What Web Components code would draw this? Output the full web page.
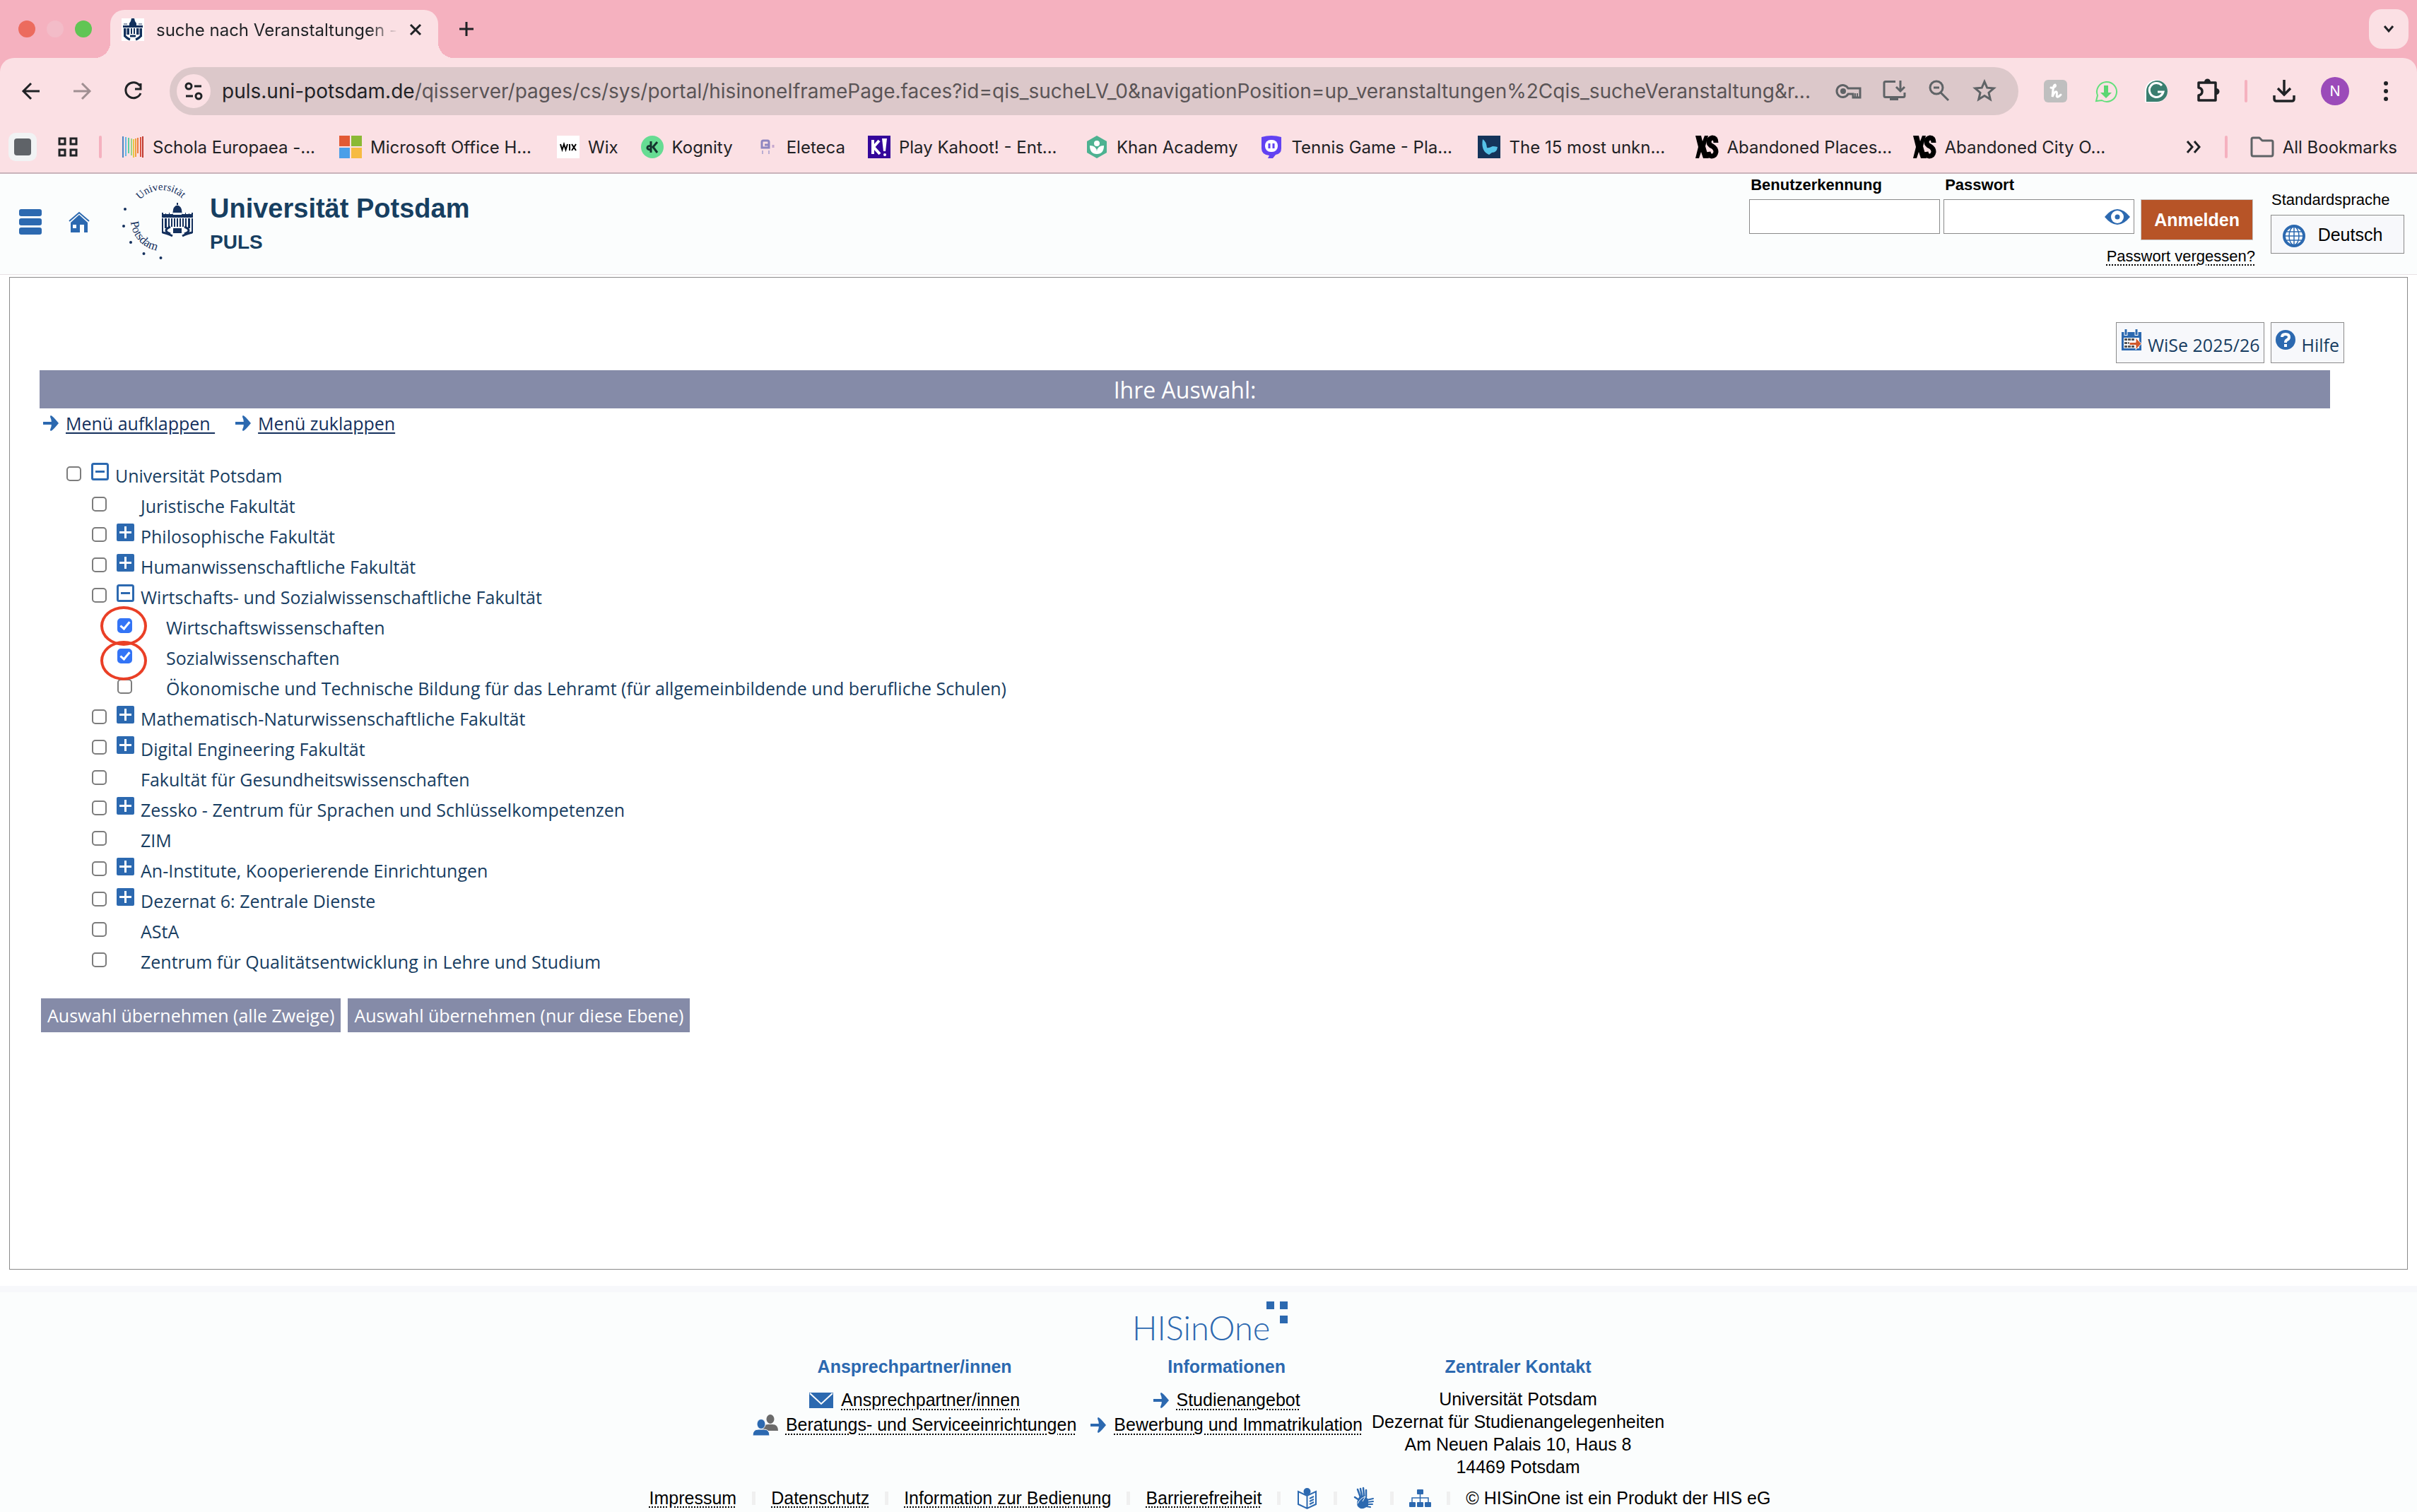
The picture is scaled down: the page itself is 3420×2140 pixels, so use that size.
<!DOCTYPE html>
<html lang="de">
<head>
<meta charset="utf-8">
<title>suche nach Veranstaltungen</title>
<style>
  html, body { margin: 0; }
  body { min-height: 100vh; display: flex; flex-direction: column; background: #fff;
    font-family: "Liberation Sans", Arial, sans-serif; font-size: 25px; color: #000;
    --blue: #2c69b0; --navy: #173d61; --tint: #fbfdfd; --box: #f7f8fb; --line: #8a8a8a; }
</style>
</head>
<body>
<browser-tabs></browser-tabs>
<browser-toolbar></browser-toolbar>
<browser-bookmarks></browser-bookmarks>
<site-header></site-header>
<course-panel></course-panel>
<site-footer></site-footer>

<script>
const ICONS = {
  favicon: [32, 32, '<path fill="#fff" d="M0 0h32v32H0z"/><path fill="#12305c" d="M14 0h4l1 4 2 3v3H11V7l2-3zM2 10h28v3H2zM3 14h3v12H3zM8 14h3v9H8zM13 14h2v8h-2zM17 14h2v8h-2zM21 14h3v9h-3zM26 14h3v12h-3z"/><path fill="none" stroke="#12305c" stroke-width="3" d="M4 24c3 4 5 5 8 6M28 24c-3 4-5 5-8 6M12 25h8"/><path fill="#8f9bb0" d="M6 14h2v9H6zM24 14h2v9h-2zM3 7h5v2H3zM24 7h5v2h-5z"/>'],
  close: [20, 20, '<path stroke="#1f2225" stroke-width="3" d="M3 3l14 14M17 3L3 17"/>'],
  plus: [24, 24, '<path stroke="#1f2225" stroke-width="3" d="M12 2v20M2 12h20"/>'],
  chevron: [16, 12, '<path fill="none" stroke="#1f2225" stroke-width="3" d="M2 2l6 7 6-7"/>'],
  back: [40, 40, '<path fill="none" stroke="#1f2225" stroke-width="3" d="M32 20H10M20 9L9 20l11 11"/>'],
  forward: [40, 40, '<path fill="none" stroke="#a08f92" stroke-width="3" d="M8 20h22M20 9l11 11-11 11"/>'],
  reload: [40, 40, '<path fill="none" stroke="#1f2225" stroke-width="3" d="M30 12.500A11 11 0 1 0 31 23M31 9v8h-8"/>'],
  tune: [48, 48, '<circle cx="24" cy="24" r="24" fill="#fbe0e4"/><g fill="none" stroke="#1f2225" stroke-width="3"><circle cx="17" cy="17" r="4"/><circle cx="31" cy="31" r="4"/><path d="M25 17h10M13 31h10"/></g>'],
  key: [40, 40, '<g fill="none" stroke="#5f6366" stroke-width="3"><path d="M19 16a8.500 8.500 0 1 0 0 8h7v5h10V16z"/></g><circle cx="12" cy="20" r="4" fill="#5f6366"/><path stroke="#5f6366" stroke-width="2" d="M29 23v5M32 23v5"/>'],
  install: [40, 40, '<path fill="none" stroke="#5f6366" stroke-width="3" d="M22 6.500H8q-2 0-2 2v18q0 2 2 2h25q2 0 2-2V22M29 5v15M23 14l6 6 6-6"/><path fill="#5f6366" d="M14 28h12v5H14z"/>'],
  zoomout: [40, 40, '<g fill="none" stroke="#5f6366" stroke-width="3"><circle cx="16" cy="15" r="9"/><path d="M22 22l11 11M12 15h8"/></g>'],
  star: [40, 40, '<path fill="none" stroke="#5f6366" stroke-width="3" d="M20 6.500l3.700 8.700 9.500.8-7.200 6.200 2.200 9.300-8.200-5-8.200 5 2.200-9.300-7.200-6.200 9.500-.8z"/>'],
  honey: [40, 40, '<rect x="4" y="4" width="33" height="32" rx="6" fill="#bfbfbf"/><path fill="none" stroke="#fff" stroke-width="3" stroke-linecap="round" d="M14 15c4 1 8-2 6-4-3 0-3 8-4 17 2-5 4-8 6-7 2 2-2 8 2 7 2-.500 3-2 4-3"/>'],
  whats: [40, 40, '<path fill="none" stroke="#63e07c" stroke-width="2" d="M6 34l2-8A14 14 0 1 1 14 33z"/><path fill="#5cd672" d="M17 12h6v10h5l-8 8-8-8h5z"/>'],
  grammar: [40, 40, '<path fill="#fff" d="M3 36V20A16 16 0 1 1 19 36z"/><path fill="#3a7e6f" d="M5 35V20A15 15 0 1 1 19 35z"/><path fill="none" stroke="#fff" stroke-width="3" d="M27 12a10 10 0 1 0 2 9H21"/>'],
  puzzle: [40, 40, '<path fill="none" stroke="#1f2225" stroke-width="3.500" stroke-linejoin="round" d="M7 8h24v25H7v-7q5-1 5-5.500T7 15z"/><path fill="#1f2225" d="M15 7a4.500 4.500 0 0 1 9 0zM32 16a4.500 4.500 0 0 1 0 9z"/>'],
  download: [40, 40, '<path fill="none" stroke="#1f2225" stroke-width="3.500" d="M20 4v21M11 16l9 9 9-9M6 26v5q0 3 3 3h22q3 0 3-3v-5"/>'],
  dots: [40, 40, '<g fill="#1f2225"><circle cx="20" cy="9" r="3"/><circle cx="20" cy="20" r="3"/><circle cx="20" cy="31" r="3"/></g>'],
  square: [40, 40, '<rect width="40" height="40" rx="10" fill="#f1f3f4"/><rect x="8" y="8" width="24" height="24" rx="4" fill="#5f6368"/>'],
  grid: [28, 28, '<g fill="none" stroke="#1f2225" stroke-width="3"><path d="M2 2h8v8H2zM18 2h8v8h-8zM2 18h8v8H2zM18 18h8v8h-8z"/></g>'],
  schola: [32, 32, '<g stroke-width="2"><path stroke="#4d86c4" d="M2 1v30"/><path stroke="#62b8e8" d="M6 2v27"/><path stroke="#5ccfa0" d="M10 3v22"/><path stroke="#9dd58a" d="M14 4v24"/><path stroke="#e9c746" d="M17 5v26"/><path stroke="#f0a040" d="M20 4v26"/><path stroke="#ee7d3c" d="M23 3v22"/><path stroke="#d9503f" d="M27 2v28"/><path stroke="#c0392f" d="M30 1v30"/></g>'],
  microsoft: [32, 32, '<path fill="#e25a34" d="M0 0h15v15H0z"/><path fill="#8bb935" d="M17 0h15v15H17z"/><path fill="#4a9fe8" d="M0 17h15v15H0z"/><path fill="#f6bb42" d="M17 17h15v15H17z"/>'],
  wix: [32, 32, '<path fill="#fff" d="M0 0h32v32H0z"/><path fill="none" stroke="#000" stroke-width="2" d="M5 12l2.500 8 2.500-8 2.500 8 2.500-8M18 12v9M21 12l6 9M27 12l-6 9"/>'],
  kognity: [32, 32, '<circle cx="16" cy="16" r="16" fill="#66dc93"/><path fill="none" stroke="#14342f" stroke-width="3" d="M14 8v16M14 15c-6-2-7 5-1 5M23 9l-6 7 6 8"/>'],
  eleteca: [32, 32, '<g fill="none" stroke="#8f86c0" stroke-width="3"><path d="M9 17V9q0-2 2-2h6q2 0 2 2v8zM13 13h6"/><path stroke="#b9aed3" stroke-width="2" d="M10 21v5M19 21v5"/><path stroke="#c4a7cf" d="M25 13v4"/></g>'],
  kahoot: [32, 32, '<path fill="#34069a" d="M0 0h32v32H0z"/><path fill="none" stroke="#fff" stroke-width="4" d="M7 6v20M16 7l-8 9 9 10"/><path fill="#fff" d="M20 4h7l-2 18h-3z"/><circle cx="24" cy="27" r="2" fill="#fff"/>'],
  khan: [32, 32, '<path fill="#4db291" d="M16 0l14 8v16l-14 8-14-8V8z"/><circle cx="16" cy="11" r="4" fill="#fff"/><path fill="#fff" d="M6 14q9 0 10 8 1-8 10-8 0 12-10 12T6 14z"/>'],
  tennis: [32, 32, '<path fill="#6242f2" d="M2 2q14-4 28 0v16q0 8-8 9l-4 5h-7l2-4Q2 27 2 18z"/><rect x="7" y="6" width="18" height="17" rx="8" fill="#fff"/><path stroke="#6242f2" stroke-width="3" d="M13 11v7M19 11v7"/>'],
  unknown: [32, 32, '<path fill="#14345a" d="M0 0h32v32H0z"/><path fill="#56c3e8" d="M7 5q5 3 6 12 2 1 8-2 3 0 7 1-1 8-8 8l-4 3Q4 22 7 5z"/>'],
  xs: [32, 32, '<path d="M0 0h8l2 8 3-8h5l-4 15 5 17h-8l-3-9-3 9H0l4-16z"/><path fill="none" stroke="#000" stroke-width="7" d="M29 10q0-7-5-7-5 1-5 6 0 4 5 6 5 3 5 8-1 6-6 6-4 0-5-6"/>'],
  more: [24, 24, '<path fill="none" stroke="#1f2225" stroke-width="3" d="M3 4l7 8-7 8M13 4l7 8-7 8"/>'],
  folder: [34, 30, '<path fill="none" stroke="#5f6366" stroke-width="3" stroke-linejoin="round" d="M2 25V4q0-2 2-2h9l4 4h13q2 0 2 2v17q0 3-2 3H4q-2 0-2-3z"/>'],
  menu: [32, 37, '<g fill="#2c69b0"><rect width="32" height="10" rx="3"/><rect y="13" width="32" height="10" rx="3"/><rect y="26" width="32" height="10" rx="3"/></g>'],
  home: [30, 30, '<path fill="none" stroke="#2c69b0" stroke-width="2" d="M1 13L15 1l14 12"/><path fill="#2c69b0" fill-rule="evenodd" d="M15 4l12 11v14h-5V18h-6v11H3V15zM6 18v5h5v-5z"/>'],
  eye: [36, 22, '<path fill="#2c69b0" d="M0 11Q18-11 36 11 18 33 0 11z"/><circle cx="18" cy="11" r="9" fill="#fff"/><circle cx="18" cy="11" r="3.500" fill="#2c69b0"/>'],
  globe: [32, 32, '<circle cx="16" cy="16" r="14" fill="#fff" stroke="#2c69b0" stroke-width="4"/><g fill="none" stroke="#2c69b0" stroke-width="1.500"><path d="M3 16h26M5 10h22M5 22h22M16 3v26"/><ellipse cx="16" cy="16" rx="7" ry="13"/></g>'],
  calendar: [30, 30, '<path fill="#2c69b0" d="M1 4h28v26H1z"/><path fill="#fff" d="M4 12h22v15H4z"/><path stroke="#fff" stroke-width="5" d="M7 0v9M22 0v9"/><path stroke="#2c69b0" stroke-width="3" d="M7 0v8M22 0v8"/><path stroke="#555" stroke-width="3" stroke-dasharray="4 1" d="M5 14.500h14M5 19.500h14M5 24.500h14"/><path fill="#d1592b" stroke="#fff" d="M12 18.500h9V12l8 8.500-8 8.500v-6.500h-9z"/>'],
  help: [28, 28, '<circle cx="14" cy="14" r="14" fill="#2c69b0"/><path fill="none" stroke="#fff" stroke-width="4" d="M9 10q0-4 5-4t5 4q0 3-3 4-2 1-2 4"/><path fill="#fff" d="M12 20h4v4h-4z"/>'],
  arrow: [22, 22, '<path fill="none" stroke="#2c69b0" stroke-width="4" d="M0 11h14"/><path fill="#2c69b0" d="M11 0q2 0 11 11-9 11-11 11-1 0-1-2 2-4 2-9t-2-9q0-2 1-2z"/>'],
  plusbox: [25, 25, '<rect width="25" height="25" rx="2" fill="#2c69b0"/><path stroke="#fff" stroke-width="3" d="M12.500 4v17M4 12.500h17"/>'],
  minusbox: [25, 25, '<rect x="1.500" y="1.500" width="22" height="22" rx="2" fill="#fff" stroke="#2c69b0" stroke-width="3"/><path stroke="#2c69b0" stroke-width="3" d="M6 12.500h13"/>'],
  mail: [34, 22, '<path fill="#2c69b0" d="M0 0h34v22H0z"/><path fill="none" stroke="#fff" stroke-width="2" d="M1 1l16 15L33 1"/>'],
  people: [36, 30, '<g fill="#6b6b6b"><ellipse cx="25" cy="6.500" rx="5.500" ry="6.500"/><path d="M14 23q0-9 8-9h6q8 0 8 9z"/></g><g fill="#2c69b0" stroke="#fff"><ellipse cx="12" cy="13.500" rx="6" ry="7"/><path d="M0 30q0-9 8-9h8q8 0 8 9z"/></g>'],
  book: [31, 31, '<circle cx="15.500" cy="6" r="5" fill="#2c69b0"/><path fill="none" stroke="#2c69b0" stroke-width="2" d="M15.500 12L3 6v18l12.500 6L28 24V6zM15.500 12v18M19 16l6-3M19 20l6-3M19 24l6-3"/>'],
  hands: [31, 31, '<g stroke="#2c69b0" stroke-linecap="round" fill="none"><path stroke-width="2.500" d="M11 14L7 3M13 12L11 2M16 12L15 1M19 14V4M9 18l-6-4"/><path stroke-width="2" d="M20 18l9-2M21 21l8-1M21 24l7 0M19 27l6 1"/></g><path fill="#2c69b0" d="M9 14q5-4 9-1l4 4v9q-5 5-11 4-7-3-4-12z"/><path fill="none" stroke="#fff" d="M7 23q4-8 11-10l-4 7"/>'],
  sitemap: [31, 27, '<g fill="#2c69b0"><rect x="11" y="1" width="9" height="7" rx="1"/><rect y="19" width="9" height="7" rx="1"/><rect x="11" y="19" width="9" height="7" rx="1"/><rect x="22" y="19" width="9" height="7" rx="1"/></g><path fill="none" stroke="#2c69b0" stroke-width="1.500" d="M15.500 7v13M4 19v-6h23v6"/>'],
  his: [218, 58, '<g fill="#2c69b0"><path d="M186 2h11v11h-11zM205 2h11v11h-11zM205 22h11v11h-11z"/></g><text x="-4" y="57" fill="#2c69b0" font-family="Lato, sans-serif" font-weight="300" font-size="47">HISinOne</text>'],
  seal: [102, 112, `<g fill="#14305d"><circle cx="4" cy="36" r="2"/><circle cx="2" cy="60" r="2"/><circle cx="12" cy="83" r="2"/><circle cx="30.500" cy="99" r="2"/><circle cx="54.500" cy="105" r="2"/></g>
    <defs><path id="a" d="M25 23A41 41 0 0 1 95 38"/><path id="b" d="M12 54A44 44 0 0 0 62 94.500"/></defs>
    <g fill="#14305d" font-family="Liberation Serif, serif"><text font-size="15"><textPath href="#a">Universität</textPath></text><text font-size="17"><textPath href="#b">Potsdam</textPath></text></g>
    <g fill="#14305d"><path d="M78 30q-8 3-6 14h12q2-11-6-14zM77 27h2v4h-2zM56 43h16v-2h12v2h16v5H56zM56 41h2v3h-2zM61 42h1v2h-1zM66 41h1v3h-1zM98 41h2v3h-2zM94 42h1v2h-1zM89 41h1v3h-1zM56 49h2v21h-2zM60 49h3v14h-3zM65 49h2v13h-2zM69 49h2v12h-2zM73 49h2v12h-2zM77 49h2v12h-2zM81 49h2v12h-2zM85 49h2v12h-2zM89 49h2v13h-2zM93 49h3v14h-3zM98 49h2v21h-2zM72 63h12v7H72z"/><path fill="none" stroke="#14305d" stroke-width="3" d="M57 69q6 1 14 5M99 69q-6 1-14 5M68 61q-12 5 0 10M88 61q12 5 0 10"/></g>`]
};

const BASE = `:host, *, *::before, *::after { box-sizing: border-box; } ui-icon { flex: none; }
  button, input { font: inherit; color: inherit; margin: 0; padding: 0; border: 0; background: none; } button { display: flex; align-items: center; justify-content: center; }`;

function define(tag, markup) {
  customElements.define(tag, class extends HTMLElement {
    connectedCallback() {
      if (this.shadowRoot) return;
      const t = document.createElement('template');
      t.innerHTML = `<style>${BASE}</style>` + (typeof markup === 'function' ? markup(this) : markup);
      this.attachShadow({ mode: 'open' }).append(t.content.cloneNode(true));
    }
  });
}

define('ui-icon', el => {
  const [w, h, body] = ICONS[el.getAttribute('name')];
  return `<style>:host { display: block; } svg { display: block; overflow: visible; }</style>
    <svg width="${w}" height="${h}" viewBox="0 0 ${w} ${h}" aria-hidden="true">${body}</svg>`;
});

define('browser-tabs', `<style>
  :host { display: flex; align-items: flex-end; height: 82px; padding: 0 12px 0 26px; background: #f5b1bf;
    font-family: Inter, sans-serif; font-size: 24px; color: #1f2225; }
  .lights { display: flex; gap: 16px; align-self: center; margin-right: 26px; }
  .lights i { width: 24px; height: 24px; border-radius: 50%; background: #ec6b5e; }
  .lights i:nth-child(2) { background: #f3bcc8; } .lights i:nth-child(3) { background: #61c554; }
  .tab { position: relative; display: flex; align-items: center; width: 464px; height: 68px; padding: 0 22px 12px 16px; border-radius: 20px 20px 0 0; background: #fbe0e4; }
  .tab::before, .tab::after { content: ""; position: absolute; bottom: 0; width: 22px; height: 22px; }
  .tab::before { right: 100%; background: radial-gradient(circle at 0 0, transparent 22px, #fbe0e4 22px); }
  .tab::after { left: 100%; background: radial-gradient(circle at 100% 0, transparent 22px, #fbe0e4 22px); }
  .name { flex: 1; margin: 0 15px 0 17px; overflow: hidden; white-space: nowrap; mask-image: linear-gradient(90deg, #000 88%, transparent); }
  .new { align-self: center; margin-left: 28px; }
  .list { align-self: center; width: 56px; height: 56px; margin-left: auto; border-radius: 18px; background: #fbe0e4; }
</style>
<div class="lights"><i></i><i></i><i></i></div>
<div class="tab"><ui-icon name="favicon"></ui-icon><span class="name">suche nach Veranstaltungen -</span><button aria-label="Close tab"><ui-icon name="close"></ui-icon></button></div>
<button class="new" aria-label="New tab"><ui-icon name="plus"></ui-icon></button>
<button class="list" aria-label="Search tabs"><ui-icon name="chevron"></ui-icon></button>`);

define('browser-toolbar', `<style>
  :host { display: block; background: #f5b1bf; font-family: Inter, sans-serif; font-size: 28px; color: #1f2225; }
  .bar { display: flex; align-items: center; gap: 32px; height: 94px; padding: 0 24px; border-radius: 20px 20px 0 0; background: #fbe0e4; }
  .pill { flex: 1; min-width: 0; display: flex; align-items: center; gap: 24px; height: 68px; padding: 0 28px 0 10px; border-radius: 34px; background: #dcc8ca; }
  .url { flex: 1; min-width: 0; margin-left: -8px; overflow: hidden; white-space: nowrap; color: #5a5456; }
  .url b { font-weight: 400; color: #1f2225; }
  .rule { width: 4px; height: 32px; border-radius: 2px; background: #f5b1bf; }
  .me { width: 40px; height: 40px; border-radius: 50%; background: #9b4bb9; color: #fff; font-size: 20px; }
</style>
<div class="bar">
  <button aria-label="Back"><ui-icon name="back"></ui-icon></button>
  <button aria-label="Forward"><ui-icon name="forward"></ui-icon></button>
  <button aria-label="Reload"><ui-icon name="reload"></ui-icon></button>
  <div class="pill"><ui-icon name="tune"></ui-icon>
    <span class="url"><b>puls.uni-potsdam.de</b>/qisserver/pages/cs/sys/portal/hisinoneIframePage.faces?id=qis_sucheLV_0&amp;navigationPosition=up_veranstaltungen%2Cqis_sucheVeranstaltung&amp;r...</span>
    <ui-icon name="key"></ui-icon><ui-icon name="install"></ui-icon><ui-icon name="zoomout"></ui-icon><ui-icon name="star"></ui-icon></div>
  <ui-icon name="honey"></ui-icon><ui-icon name="whats"></ui-icon><ui-icon name="grammar"></ui-icon><ui-icon name="puzzle"></ui-icon>
  <span class="rule"></span><ui-icon name="download"></ui-icon><button class="me">N</button><ui-icon name="dots"></ui-icon>
</div>`);

define('book-mark', el => `<style>
  :host { display: block; } a { display: flex; align-items: center; gap: 12px; color: inherit; text-decoration: none; white-space: nowrap; }
  :host([cut]) span { width: 232px; }
</style><a href="#"><ui-icon name="${el.getAttribute('icon')}"></ui-icon><span><slot></slot></span></a>`);

define('browser-bookmarks', `<style>
  :host { display: flex; align-items: center; gap: 32px; height: 70px; padding: 0 28px 4px 12px; border-bottom: 2px solid #c9b3ba; background: #fbe0e4;
    font-family: Inter, sans-serif; font-size: 24px; color: #1f2225; }
  .lead { display: flex; align-items: center; gap: 30px; margin-right: -4px; }
  .tail { display: flex; align-items: center; gap: 32px; margin-left: auto; }
  .rule { width: 4px; height: 32px; border-radius: 2px; background: #f5b1bf; }
</style>
<div class="lead"><ui-icon name="square"></ui-icon><ui-icon name="grid"></ui-icon><span class="rule"></span></div>
<book-mark icon="schola" cut>Schola Europaea -...</book-mark>
<book-mark icon="microsoft" cut>Microsoft Office H...</book-mark>
<book-mark icon="wix">Wix</book-mark>
<book-mark icon="kognity">Kognity</book-mark>
<book-mark icon="eleteca">Eleteca</book-mark>
<book-mark icon="kahoot" cut>Play Kahoot! - Ent...</book-mark>
<book-mark icon="khan">Khan Academy</book-mark>
<book-mark icon="tennis" cut>Tennis Game - Pla...</book-mark>
<book-mark icon="unknown" cut>The 15 most unkn...</book-mark>
<book-mark icon="xs" cut>Abandoned Places...</book-mark>
<book-mark icon="xs" cut>Abandoned City O...</book-mark>
<div class="tail"><ui-icon name="more"></ui-icon><span class="rule"></span><book-mark icon="folder">All Bookmarks</book-mark></div>`);

define('login-form', `<style>
  :host { display: block; font-size: 22px; }
  form { display: grid; grid-template-columns: auto auto auto; column-gap: 5px; }
  label { height: 36px; padding-left: 2px; line-height: 32px; font-weight: 700; }
  input { width: 270px; height: 49px; padding: 0 8px; border: 1px solid var(--line); background: #fff; }
  .pass { position: relative; }
  .pass button { position: absolute; right: 6px; top: 14px; }
  .go { grid-column: 3; height: 58px; margin-left: 4px; padding: 0 18px; border: 1px solid #c8c8c8; background: #b75427; color: #fff; font-size: 25px; font-weight: 700; }
  .forgot { grid-column: 1 / -1; justify-self: end; margin: 10px -3px 0 0; color: inherit; text-decoration: underline dotted 2px; text-underline-offset: 4px; }
</style>
<form>
  <label for="user">Benutzerkennung</label><label for="pw">Passwort</label><span></span>
  <input id="user" type="text">
  <div class="pass"><input id="pw" type="password"><button type="button" aria-label="Passwort anzeigen"><ui-icon name="eye"></ui-icon></button></div>
  <button class="go" type="button">Anmelden</button>
  <a class="forgot" href="#">Passwort vergessen?</a>
</form>`);

define('site-header', `<style>
  :host { display: flex; align-items: flex-start; height: 143px; padding-right: 18px; border-bottom: 1px solid #e8e2e4; background: var(--tint); }
  nav { display: flex; align-items: center; gap: 38px; height: 137px; padding-left: 27px; }
  .seal { margin: 14px 0 0 46px; }
  .title { margin: 25px auto 0 22px; color: #173f61; font-weight: 700; }
  h1 { margin: 0; font-size: 38px; line-height: 48px; } h2 { margin: 0; font-size: 28px; line-height: 48px; }
  .lang { margin: 22px 0 0 25px; font-size: 22px; line-height: 30px; }
  .lang span { display: block; padding-left: 1px; }
  .lang button { width: 189px; height: 55px; margin-top: 6px; padding: 4px 14px 0 0; gap: 17px; border: 1px solid var(--line); background: var(--box); font-size: 25px; }
  .lang button span { padding-bottom: 4px; }
</style>
<nav><a href="#" aria-label="Menü"><ui-icon name="menu"></ui-icon></a><a href="#" aria-label="Startseite"><ui-icon name="home"></ui-icon></a></nav>
<ui-icon class="seal" name="seal"></ui-icon>
<div class="title"><h1>Universität Potsdam</h1><h2>PULS</h2></div>
<login-form></login-form>
<div class="lang"><span>Standardsprache</span><button><ui-icon name="globe"></ui-icon><span>Deutsch</span></button></div>`);

define('tree-item', el => {
  const toggle = el.getAttribute('toggle');
  return `<style>
  :host { position: relative; display: flex; align-items: center; height: 43px; padding-left: 38px; }
  :host([level="1"]) { padding-left: 74px; } :host([level="2"]) { padding-left: 110px; }
  input { appearance: none; flex: none; display: grid; place-items: center; width: 21px; height: 21px; border: 2px solid #7c7c7c; border-radius: 5px; background: #fff; }
  input:checked { border-color: #3374f6; background: #3374f6; }
  input:checked::before { content: ""; width: 8px; height: 14px; margin-bottom: 4px; border: solid #fff; border-width: 0 3px 3px 0; transform: rotate(40deg); }
  .toggle { width: 25px; margin: 0 9px 6px 14px; }
  label { padding-top: 5px; white-space: nowrap; }
  .ring { position: absolute; left: 86px; top: -6px; width: 66px; height: 56px; border: 4px solid #ea3f26; border-radius: 50%; z-index: 1; }
  :host([ringed="low"]) .ring { top: 0; }
</style>
<input type="checkbox" id="box" ${el.hasAttribute('checked') ? 'checked' : ''}>
<span class="toggle">${toggle ? `<ui-icon name="${toggle}box"></ui-icon>` : ''}</span>
<label for="box"><slot></slot></label>${el.hasAttribute('ringed') ? '<span class="ring"></span>' : ''}`;
});

define('course-panel', `<style>
  :host { flex: 1; display: flex; flex-direction: column; margin: 3px 13px 23px 13px; border: 1px solid var(--line); background: #fff;
    font-family: "Open Sans", "Noto Sans", sans-serif; font-size: 25px; color: var(--navy); }
  .tools { display: flex; justify-content: flex-end; gap: 9px; padding: 63px 89px 0 0; }
  .tools button { height: 58px; padding: 0 6px; gap: 8px; border: 1px solid var(--line); background: var(--box); }
  .tools ui-icon { margin-bottom: 8px; } .tools span { padding-top: 6px; }
  .body { margin: 10px 109px 0 42px; }
  h2 { margin: 0; height: 54px; line-height: 56px; background: #858ba8; color: #fff; font-size: 32px; font-weight: 400; text-align: center; }
  .fold { display: flex; align-items: center; gap: 10px; height: 42px; margin-bottom: 29px; padding-left: 5px; }
  .fold a { color: #14305d; white-space: pre; text-underline-offset: 3px; } .fold a + ui-icon { margin-left: 19px; }
  .send { display: flex; gap: 10px; margin: 33px 0 0 2px; }
  .send button { height: 48px; padding: 0 9px; background: #858ba8; color: #fff; }
</style>
<div class="tools"><button><ui-icon name="calendar"></ui-icon><span>WiSe 2025/26</span></button><button><ui-icon name="help"></ui-icon><span>Hilfe</span></button></div>
<div class="body">
<h2>Ihre Auswahl:</h2>
<div class="fold"><ui-icon name="arrow"></ui-icon><a href="#">Menü aufklappen </a><ui-icon name="arrow"></ui-icon><a href="#">Menü zuklappen</a></div>
<tree-item toggle="minus">Universität Potsdam</tree-item>
<tree-item level="1">Juristische Fakultät</tree-item>
<tree-item level="1" toggle="plus">Philosophische Fakultät</tree-item>
<tree-item level="1" toggle="plus">Humanwissenschaftliche Fakultät</tree-item>
<tree-item level="1" toggle="minus">Wirtschafts- und Sozialwissenschaftliche Fakultät</tree-item>
<tree-item level="2" checked ringed>Wirtschaftswissenschaften</tree-item>
<tree-item level="2" checked ringed="low">Sozialwissenschaften</tree-item>
<tree-item level="2">Ökonomische und Technische Bildung für das Lehramt (für allgemeinbildende und berufliche Schulen)</tree-item>
<tree-item level="1" toggle="plus">Mathematisch-Naturwissenschaftliche Fakultät</tree-item>
<tree-item level="1" toggle="plus">Digital Engineering Fakultät</tree-item>
<tree-item level="1">Fakultät für Gesundheitswissenschaften</tree-item>
<tree-item level="1" toggle="plus">Zessko - Zentrum für Sprachen und Schlüsselkompetenzen</tree-item>
<tree-item level="1">ZIM</tree-item>
<tree-item level="1" toggle="plus">An-Institute, Kooperierende Einrichtungen</tree-item>
<tree-item level="1" toggle="plus">Dezernat 6: Zentrale Dienste</tree-item>
<tree-item level="1">AStA</tree-item>
<tree-item level="1">Zentrum für Qualitätsentwicklung in Lehre und Studium</tree-item>
<div class="send"><button>Auswahl übernehmen (alle Zweige)</button><button>Auswahl übernehmen (nur diese Ebene)</button></div>
</div>`);

define('footer-link', el => `<style>
  :host { display: flex; align-items: center; justify-content: center; gap: 11px; height: 35px; }
  a { color: inherit; white-space: nowrap; text-decoration: underline dotted 2px; text-underline-offset: 4px; }
</style><ui-icon name="${el.getAttribute('icon')}"></ui-icon><a href="#"><slot></slot></a>`);

define('site-footer', `<style>
  :host { display: block; height: 320px; border-top: 9px solid var(--box); background: var(--tint); }
  .logo { display: flex; justify-content: center; padding: 11px 0 0 10px; }
  .cols { display: flex; justify-content: center; gap: 20px; margin-top: 18px; text-align: center; }
  .cols section:last-child { margin-left: -7px; }
  h3 { margin: 0 0 12px; font-size: 25px; line-height: 36px; color: var(--blue); }
  address { font-style: normal; line-height: 32px; }
  .legal { display: flex; justify-content: center; align-items: center; gap: 22px; height: 40px; margin-top: 8px; padding-left: 4px; white-space: nowrap; }
  .legal a { color: inherit; text-decoration: underline dotted 2px; text-underline-offset: 4px; }
  .legal i { width: 5px; height: 19px; background: #f0f0f0; }
</style>
<div class="logo"><ui-icon name="his"></ui-icon></div>
<div class="cols">
  <section><h3>Ansprechpartner/innen</h3><footer-link icon="mail">Ansprechpartner/innen</footer-link><footer-link icon="people">Beratungs- und Serviceeinrichtungen</footer-link></section>
  <section><h3>Informationen</h3><footer-link icon="arrow">Studienangebot</footer-link><footer-link icon="arrow">Bewerbung und Immatrikulation</footer-link></section>
  <section><h3>Zentraler Kontakt</h3><address>Universität Potsdam<br>Dezernat für Studienangelegenheiten<br>Am Neuen Palais 10, Haus 8<br>14469 Potsdam</address></section>
</div>
<div class="legal"><a href="#">Impressum</a><i></i><a href="#">Datenschutz</a><i></i><a href="#">Information zur Bedienung</a><i></i><a href="#">Barrierefreiheit</a><i></i>
<ui-icon name="book"></ui-icon><i></i><ui-icon name="hands"></ui-icon><i></i><ui-icon name="sitemap"></ui-icon><i></i><span>© HISinOne ist ein Produkt der HIS eG</span></div>`);
</script>
</body>
</html>
